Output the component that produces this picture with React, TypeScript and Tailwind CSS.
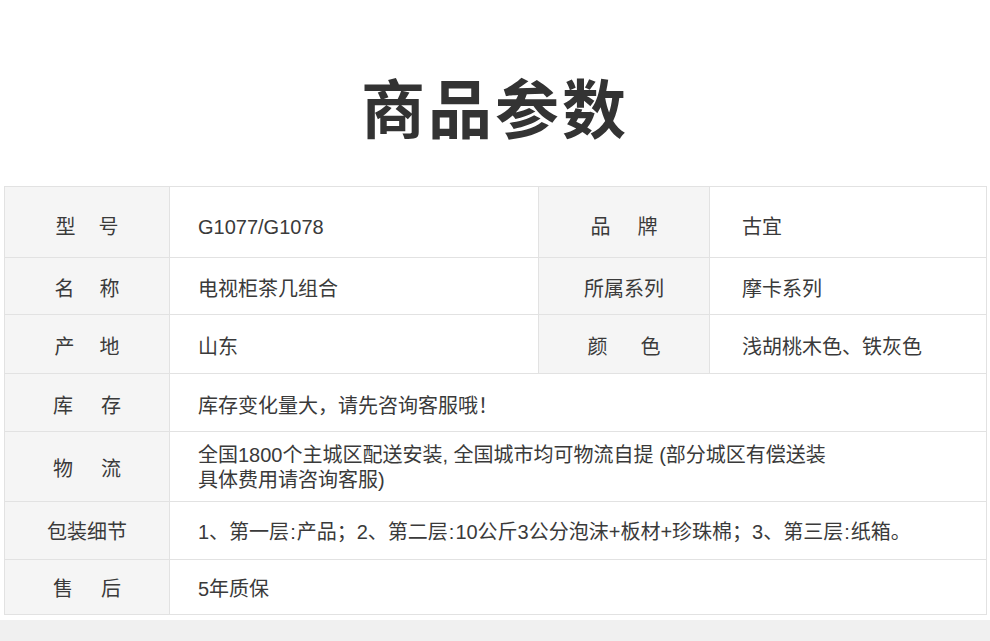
import React from "react";

const font = { fontFamily: '"Liberation Sans", "Noto Sans CJK SC", sans-serif' };

function Label({ a, b, gap, pt }: { a: string; b?: string; gap?: string; pt?: string }) {
  return (
    <td className={`bg-[#f5f5f5] border border-[#e2e2e2] text-center align-middle ${pt ?? "pt-[7px]"}`}>
      <div className={`flex justify-center ${gap ?? ""}`}>
        <span>{a}</span>
        {b ? <span>{b}</span> : null}
      </div>
    </td>
  );
}

function Val({ children, span, pl, pt }: { children: React.ReactNode; span?: number; pl?: string; pt?: string }) {
  return (
    <td colSpan={span} className={`bg-white border border-[#e2e2e2] align-middle ${pl ?? "pl-[28px]"} ${pt ?? "pt-[7px]"}`}>
      {children}
    </td>
  );
}

const C = () => <span className="px-[1px]">:</span>;

export default function App() {
  return (
    <div className="w-[990px] h-[641px] bg-white text-[#3a3a3a] flex flex-col" style={font}>
      <div className="h-[186px] flex items-center justify-center pt-[36px]">
        <h1 className="text-[64px] font-bold leading-none text-[#333] tracking-[3px]">商品参数</h1>
      </div>
      <div className="px-[4px]">
        <table className="w-[982px] border-collapse text-[20px] leading-[25px] table-fixed">
          <colgroup>
            <col className="w-[165px]" />
            <col className="w-[369px]" />
            <col className="w-[171px]" />
            <col className="w-[277px]" />
          </colgroup>
          <tbody>
            <tr className="h-[71px]">
              <Label a="型" b="号" gap="gap-[23px]" pt="pt-[11px]" />
              <Val pt="pt-[11px]">G1077/G1078</Val>
              <Label a="品" b="牌" gap="gap-[27px]" pt="pt-[11px]" />
              <Val pl="pl-[32px]" pt="pt-[11px]">古宜</Val>
            </tr>
            <tr className="h-[57px]">
              <Label a="名" b="称" gap="gap-[25px]" />
              <Val>电视柜茶几组合</Val>
              <Label a="所属系列" />
              <Val pl="pl-[32px]">摩卡系列</Val>
            </tr>
            <tr className="h-[59px]">
              <Label a="产" b="地" gap="gap-[25px]" />
              <Val>山东</Val>
              <Label a="颜" b="色" gap="gap-[33px]" />
              <Val pl="pl-[32px]">浅胡桃木色、铁灰色</Val>
            </tr>
            <tr className="h-[58px]">
              <Label a="库" b="存" gap="gap-[28px]" />
              <Val span={3}>库存变化量大，请先咨询客服哦！</Val>
            </tr>
            <tr className="h-[70px]">
              <Label a="物" b="流" gap="gap-[28px]" pt="pt-[5px]" />
              <Val span={3} pt="pt-[3px]">
                全国1800个主城区配送安装, 全国城市均可物流自提 (部分城区有偿送装
                <br />
                具体费用请咨询客服)
              </Val>
            </tr>
            <tr className="h-[58px]">
              <Label a="包装细节" pt="pt-[4px]" />
              <Val span={3} pt="pt-[4px]">
                1、第一层<C />产品；2、第二层<C />10公斤3公分泡沫+板材+珍珠棉；3、第三层<C />纸箱。
              </Val>
            </tr>
            <tr className="h-[55px]">
              <Label a="售" b="后" gap="gap-[28px]" pt="pt-[5px]" />
              <Val span={3} pt="pt-[5px]">5年质保</Val>
            </tr>
          </tbody>
        </table>
      </div>
      <div className="h-[5px] bg-white" />
      <div className="flex-1 bg-[#f0f0f0]" />
    </div>
  );
}
